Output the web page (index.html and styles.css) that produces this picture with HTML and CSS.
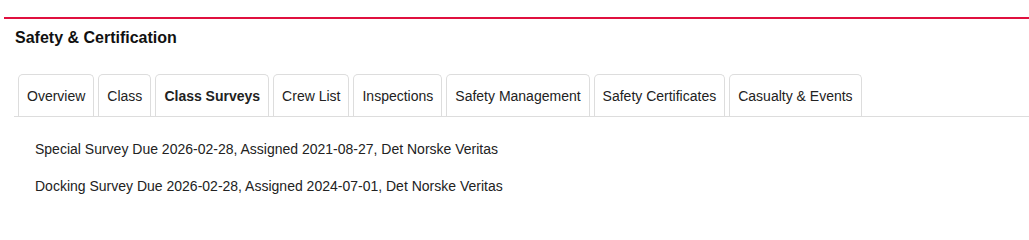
FILE: index.html
```html
<!DOCTYPE html>
<html lang="en">
<head>
    <meta charset="UTF-8">
    <meta name="viewport" content="width=device-width, initial-scale=1.0">
    <title>Safety &amp; Certification</title>
    <link rel="stylesheet" href="styles.css">
</head>
<body>
    <div class="panel">
        <div class="rule"></div>
        <h2 class="title">Safety &amp; Certification</h2>

        <div class="tabs">
            <div class="tab">Overview</div>
            <div class="tab">Class</div>
            <div class="tab active">Class Surveys</div>
            <div class="tab">Crew List</div>
            <div class="tab">Inspections</div>
            <div class="tab">Safety Management</div>
            <div class="tab">Safety Certificates</div>
            <div class="tab">Casualty &amp; Events</div>
        </div>

        <div class="surveys">
            <div class="survey">Special Survey Due 2026-02-28, Assigned 2021-08-27, Det Norske Veritas</div>
            <div class="survey">Docking Survey Due 2026-02-28, Assigned 2024-07-01, Det Norske Veritas</div>
        </div>
    </div>
</body>
</html>
```

FILE: styles.css
```css
:root {
    --accent: #e0103f;
    --line: #dddddd;
    --text: #222222;
}

* {
    margin: 0;
    padding: 0;
    box-sizing: border-box;
}

body {
    font-family: "Liberation Sans", Arial, sans-serif;
    font-size: 14px;
    color: var(--text);
    background: #fff;
    overflow: hidden;
}

.panel {
    margin: 17px 0 0 4px;
}

.rule {
    height: 2px;
    background-color: var(--accent);
}

.title {
    font-size: 16px;
    font-weight: bold;
    color: #111;
    margin: 10px 0 0 11px;
    line-height: 18px;
}

.tabs {
    display: flex;
    gap: 4px;
    margin: 27px 0 0 10px;
    padding-left: 4px;
    border-bottom: 1px solid var(--line);
}

.tab {
    height: 42px;
    line-height: 42px;
    padding: 0 8px;
    border: 1px solid var(--line);
    border-bottom: none;
    border-radius: 5px 5px 0 0;
    white-space: nowrap;
}

.tab.active {
    font-weight: bold;
}

.surveys {
    padding: 24px 0 0 31px;
}

.survey {
    line-height: 16px;
    margin-bottom: 21px;
}
```
